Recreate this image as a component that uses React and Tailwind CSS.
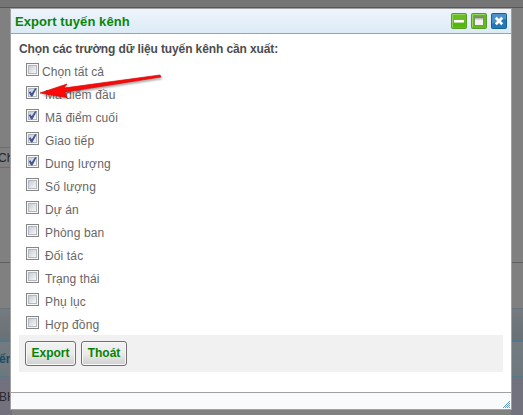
import React from "react";

const fields = [
  { label: "Chọn tất cả", checked: false, spacing: "tracking-[0.05px]" },
  { label: "Mã điểm đầu", checked: true, spacing: "tracking-[0.1px]" },
  { label: "Mã điểm cuối", checked: true, spacing: "tracking-[0.13px]" },
  { label: "Giao tiếp", checked: true, spacing: "tracking-[0.13px]" },
  { label: "Dung lượng", checked: true, spacing: "tracking-[0.2px]" },
  { label: "Số lượng", checked: false, spacing: "tracking-[0.13px]" },
  { label: "Dự án", checked: false, spacing: "tracking-[0.1px]" },
  { label: "Phòng ban", checked: false, spacing: "tracking-[0.15px]" },
  { label: "Đối tác", checked: false, spacing: "tracking-[0.13px]" },
  { label: "Trạng thái", checked: false, spacing: "tracking-[0.08px]" },
  { label: "Phụ lục", checked: false, spacing: "tracking-[0.13px]" },
  { label: "Hợp đồng", checked: false, spacing: "tracking-[0.13px]" },
];

function Checkbox({ checked }) {
  return (
    <span className="block size-[13px] shrink-0 border border-[#858686] bg-[#f7f7f7] p-px">
      <span className="block size-[9px] border border-[#b4b8c0] bg-linear-to-br from-[#c8ccd3] to-[#f8f8f8]">
        {checked && (
          <svg className="-mt-px -ml-px block size-[9px]" viewBox="0 0 9 9">
            <path d="M0.8 4.2L2.4 3.3L3.7 5.3L7 0.3L8.7 0.3L4.4 8.5H3Z" fill="#3f5594" />
          </svg>
        )}
      </span>
    </span>
  );
}

function WindowIcons() {
  return (
    <div className="flex gap-1">
      <svg className="size-4" viewBox="0 0 16 16">
        <rect x=".5" y=".5" width="15" height="15" rx="1" fill="#68bd22" stroke="#579b2d" />
        <path d="M1.5 14V1.5H14" fill="none" stroke="#91d655" />
        <path d="M2 9H14V14H2Z" fill="#55b60b" />
        <rect x="3" y="7" width="10" height="2" fill="#fff" />
        <path d="M3 9.5H13" stroke="#b5dd95" />
      </svg>
      <svg className="size-4" viewBox="0 0 16 16">
        <rect x=".5" y=".5" width="15" height="15" rx="1" fill="#62bb19" stroke="#579b2d" />
        <path d="M1.5 14V1.5H14" fill="none" stroke="#91d655" />
        <rect x="3.5" y="3.5" width="9" height="9" fill="#f2f2f2" stroke="#759858" />
        <path d="M4 4.5H12" stroke="#858585" />
        <path d="M4 5.5H12" stroke="#b9b9b9" />
        <path d="M4 6.5H12" stroke="#dadada" />
      </svg>
      <svg className="size-4" viewBox="0 0 16 16">
        <rect x=".5" y=".5" width="15" height="15" rx="1" fill="#2478b7" stroke="#175f9b" />
        <path d="M1 1H15V6Q8 6 1 11Z" fill="#4d91c8" />
        <path d="M4.8 4.8L11.2 11.2M11.2 4.8L4.8 11.2" stroke="#fff" strokeWidth="2.7" />
      </svg>
    </div>
  );
}

function PageStrip({ left }) {
  return (
    <div className="flex h-full w-3 flex-col whitespace-nowrap text-[12px]">
      <div className="h-[139px] border-b border-transparent" />
      <div className={left ? "h-[21px] border-y border-[#6d6d6d] pt-px leading-[18px] text-[#242424]" : "h-[21px]"}>
        {left && <span className="-ml-0.5">Ch</span>}
      </div>
      <div className="h-[95px] border-b border-[#5f5f5f]" />
      <div className="h-[46px] border-b border-[#67747e]" />
      <div className="h-[31px] bg-linear-to-b from-[#757b80] to-[#687176]" />
      <div className="h-0.5 bg-[#557789]" />
      <div className="h-[35px] border-b border-[#587989] bg-linear-to-b from-[#737b81] to-[#6d787d] leading-[34px] font-bold text-[#164b67]">
        {left && <span className="-ml-px">ến</span>}
      </div>
      <div className="grow bg-[#72727f] pt-[11px] leading-[18px] text-[#292930]">
        {left && <span className="-ml-px">BH</span>}
      </div>
    </div>
  );
}

function Button({ children, className }) {
  return (
    <button className={`${className} h-[25px] rounded-[3px] border border-[#707070] bg-linear-to-b from-[#f2f2f2] from-0% via-[#ebebeb] via-50% to-[#cfcfcf] text-center text-[12px] leading-[23px] font-bold text-[#078207] shadow-[inset_0_0_0_1px_#f8f8f8]`}>
      {children}
    </button>
  );
}

export default function App() {
  return (
    <div className="relative h-[415px] w-[523px] overflow-hidden bg-[#808080] font-['Liberation_Sans',Arial,sans-serif]">
      <div className="flex h-full flex-col">
        <div className="h-2 shrink-0 border-b border-[#575757] bg-[#757575]" />
        <div className="flex grow justify-between">
          <PageStrip left />
          <PageStrip />
        </div>
      </div>
      <section className="absolute top-2 left-[10px] flex h-[402px] w-[502px] flex-col border border-[#a0a0a0] bg-white">
        <header className="flex h-[25px] shrink-0 items-center justify-between border-b border-[#a0a3a9] bg-linear-to-b from-[#eef4fb] to-[#dcebf6] pr-[4px] pl-[4px]">
          <h1 className="pt-[2px] text-[13px] leading-4 font-bold tracking-[0.08px] text-[#078507]">Export tuyến kênh</h1>
          <WindowIcons />
        </header>
        <main className="flex grow flex-col px-2 pt-[7px]">
          <h2 className="h-[18px] text-[12px] leading-4 font-bold tracking-[-0.11px] whitespace-nowrap text-[#4d4d4d]">
            Chọn các trường dữ liệu tuyến kênh cần xuất:
          </h2>
          <div className="pl-[7px]">
            {fields.map((f, i) => (
              <label key={f.label} className="flex h-[23px] items-start pt-[4px]">
                <Checkbox checked={f.checked} />
                <span className={`${f.spacing} text-[12px] leading-[18px] whitespace-nowrap text-[#666] ${i === 0 ? "ml-[3px]" : "ml-[6px]"}`}>
                  {f.label}
                </span>
              </label>
            ))}
          </div>
          <div className="flex h-[37px] shrink-0 gap-[5px] bg-[#f1f1f1] px-[6px] pt-[6px]">
            <Button className="w-[51px]">Export</Button>
            <Button className="w-[46px]">Thoát</Button>
          </div>
        </main>
        <footer className="flex h-[17px] shrink-0 items-end justify-end border-t border-[#a0a0a0] bg-[#f9fafc] pr-px pb-px">
          <svg className="size-[7px]" viewBox="0 0 7 7" shapeRendering="crispEdges">
            <path d="M6 0h1v1h-1zM5 1h1v1h-1zM4 2h1v1h-1zM6 2h1v1h-1zM3 3h1v1h-1zM5 3h1v1h-1zM2 4h1v1h-1zM4 4h1v1h-1zM6 4h1v1h-1zM1 5h1v1h-1zM3 5h1v1h-1zM5 5h1v1h-1zM0 6h1v1h-1zM2 6h1v1h-1zM4 6h1v1h-1zM6 6h1v1h-1z" fill="#5b9bca" />
          </svg>
        </footer>
      </section>
      <svg className="absolute top-[65px] left-[36px] h-[40px] w-[132px]" viewBox="36 65 132 40">
        <path d="M41 93L67 84L64 88L160 75L161 77L64 92L66 97Z" fill="#555" opacity=".6" transform="translate(1 2)" style={{ filter: "blur(1.2px)" }} />
        <path d="M40 93L67 84L64 88L160 75L161 77L65 92L67 97.5Z" fill="#fb0808" stroke="#d60808" strokeWidth=".7" />
      </svg>
    </div>
  );
}
